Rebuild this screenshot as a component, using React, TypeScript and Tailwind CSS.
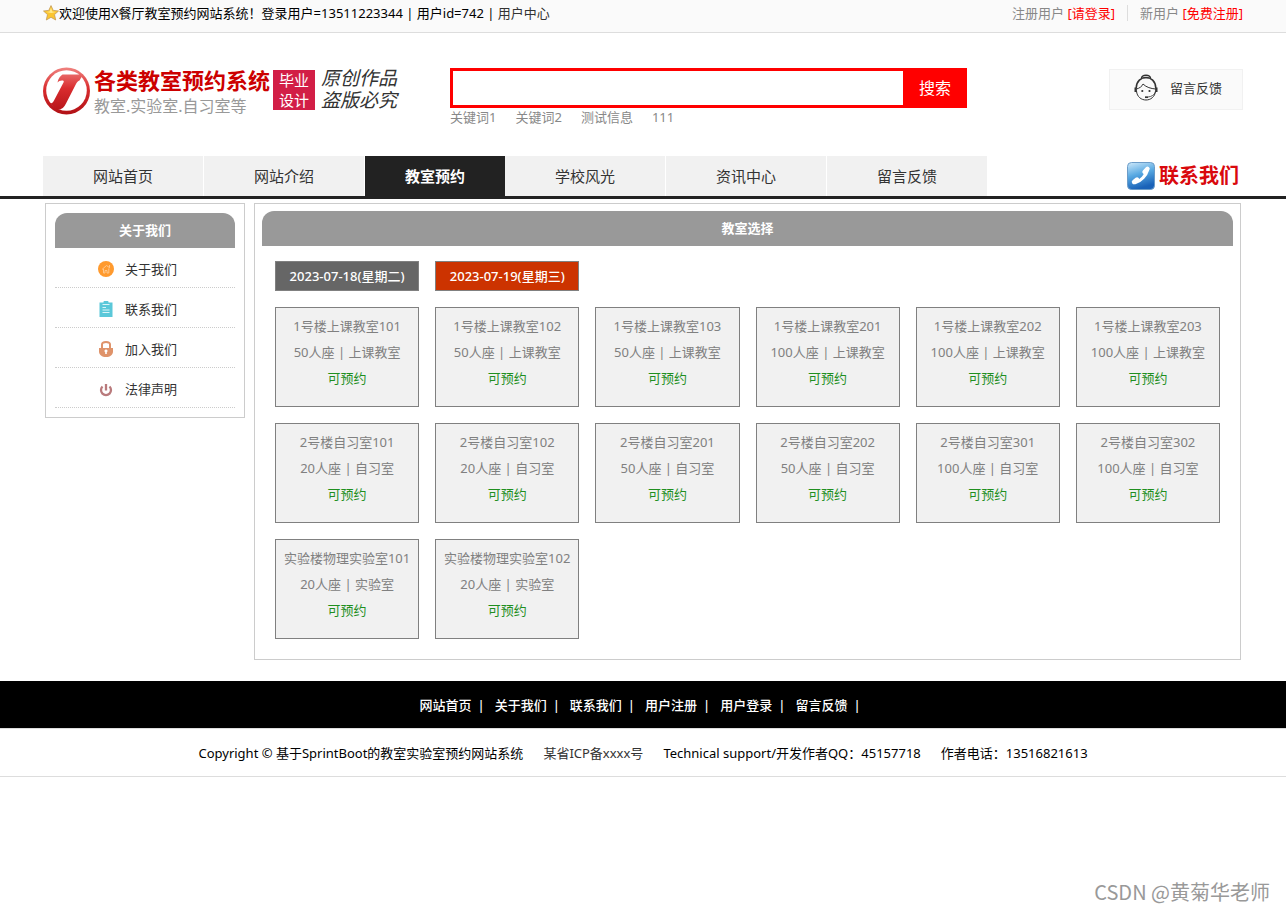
import React, { useState } from "react";

interface Room {
  name: string;
  seats: number;
  type: string;
}

const navItems = ["网站首页", "网站介绍", "教室预约", "学校风光", "资讯中心", "留言反馈"];
const keywords = ["关键词1", "关键词2", "测试信息", "111"];
const dates = ["2023-07-18(星期二)", "2023-07-19(星期三)"];
const footerLinks = ["网站首页", "关于我们", "联系我们", "用户注册", "用户登录", "留言反馈"];

const rooms: Room[] = [
  { name: "1号楼上课教室101", seats: 50, type: "上课教室" },
  { name: "1号楼上课教室102", seats: 50, type: "上课教室" },
  { name: "1号楼上课教室103", seats: 50, type: "上课教室" },
  { name: "1号楼上课教室201", seats: 100, type: "上课教室" },
  { name: "1号楼上课教室202", seats: 100, type: "上课教室" },
  { name: "1号楼上课教室203", seats: 100, type: "上课教室" },
  { name: "2号楼自习室101", seats: 20, type: "自习室" },
  { name: "2号楼自习室102", seats: 20, type: "自习室" },
  { name: "2号楼自习室201", seats: 50, type: "自习室" },
  { name: "2号楼自习室202", seats: 50, type: "自习室" },
  { name: "2号楼自习室301", seats: 100, type: "自习室" },
  { name: "2号楼自习室302", seats: 100, type: "自习室" },
  { name: "实验楼物理实验室101", seats: 20, type: "实验室" },
  { name: "实验楼物理实验室102", seats: 20, type: "实验室" },
];

function StarIcon() {
  return (
    <svg className="h-4 w-4" viewBox="0 0 16 16" aria-hidden="true">
      <path
        d="M8 .6l2.2 4.800 5.300.6-4 3.600 1.200 5.400L8 12.300 3.300 15l1.200-5.400L.5 6l5.300-.6z"
        fill="#fbc52f"
        stroke="#c49a55"
        strokeWidth=".8"
        strokeLinejoin="round"
      />
      <path d="M8 2.500l1.300 3.900 3.900.5-4.900 1.100L3 6.900l3.600-.5z" fill="#ffe98a" />
    </svg>
  );
}

function LogoMark() {
  return (
    <svg className="h-12 w-12 shrink-0" viewBox="0 0 48 48" aria-hidden="true">
      <defs>
        <linearGradient id="logoRed" gradientUnits="userSpaceOnUse" x1="0" y1="0" x2="0" y2="48">
          <stop offset="0" stopColor="#f08582" />
          <stop offset=".45" stopColor="#d92c2e" />
          <stop offset="1" stopColor="#b01015" />
        </linearGradient>
      </defs>
      <circle cx="23.500" cy="24" r="23.500" fill="url(#logoRed)" />
      <circle cx="23.500" cy="23.500" r="20.300" fill="#fff" />
      <path
        d="M19.500 7.500H40l-3.500 6c-1.500.5-2.500 1.500-3.500 3.500L23 36.500c-2 4-4.500 6.500-9 6L7 36.500c2 0 3-1 4-3l9.500-18c.8-1.600 0-2-1.500-2-2 0-3.500.8-4.500 2 .5-3.500 2.500-6.500 5-8z"
        fill="url(#logoRed)"
      />
    </svg>
  );
}

function ServiceIcon() {
  return (
    <svg className="h-[27px] w-6" viewBox="0 0 24 27" fill="none" stroke="#333" aria-hidden="true">
      <path d="M7.500 4.200C8 .2 16 .2 16.500 4.200" strokeWidth="1.400" />
      <path d="M9 3.800h6" strokeWidth=".8" />
      <path d="M2.200 14C2.500 0 21.500 0 21.800 14" strokeWidth="1.600" />
      <path d="M2.500 17c1 12 18 12 19 0" strokeWidth="1" />
      <path d="M2.500 15c3-.8 5.500-2.500 6.500-5 3.500 3.500 8 4.500 12.500 5" strokeWidth="1" />
      <path d="M1.700 13.500v4.500M22.300 13.500v4.500" strokeWidth="2.400" />
      <path d="M21.500 18c-1.500 3-3.500 4.500-7.500 5" strokeWidth=".8" />
      <circle cx="8.300" cy="17" r="1.100" fill="#333" stroke="none" />
      <circle cx="15.500" cy="17" r="1.100" fill="#333" stroke="none" />
      <path d="M11 23.200h3" strokeWidth="1.700" />
    </svg>
  );
}

function PhoneIcon() {
  return (
    <svg className="h-7 w-7" viewBox="0 0 28 28" aria-hidden="true">
      <defs>
        <linearGradient id="phoneBlue" x1="0" y1="0" x2=".3" y2="1">
          <stop offset="0" stopColor="#cfe9fa" />
          <stop offset=".5" stopColor="#58a9e2" />
          <stop offset="1" stopColor="#1a62b8" />
        </linearGradient>
      </defs>
      <rect x=".5" y=".5" width="27" height="27" rx="4" fill="url(#phoneBlue)" stroke="#6c9cc8" />
      <path d="M8.500 20.500C14 19 19 13.500 20.500 8" fill="none" stroke="#fff" strokeWidth="3.200" strokeLinecap="round" />
      <path d="M7 20l3-2.500M17.500 10l3-3.200" fill="none" stroke="#fff" strokeWidth="4.400" strokeLinecap="round" />
    </svg>
  );
}

function HomeIcon() {
  return (
    <svg className="h-4 w-4" viewBox="0 0 16 16" aria-hidden="true">
      <circle cx="8" cy="8" r="8" fill="#ff9a2e" />
      <path d="M4 8.500l4.500-4 3.500 2.500M5.500 8v4h1.500V9.500h2V12h1.800V7.500M11.500 4v2.500" fill="none" stroke="#ffc78a" />
    </svg>
  );
}

function ClipboardIcon() {
  return (
    <svg className="h-4 w-4" viewBox="0 0 16 16" aria-hidden="true">
      <path d="M1.500 1.500h4a2.500 2.500 0 0 1 5 0h4V16h-13z" fill="#5bc8d9" />
      <path d="M4.500 3.500h7M4.500 6.500h3.500M4.500 9h7M4.500 11.500h7" stroke="#d9f4f8" />
    </svg>
  );
}

function LockIcon() {
  return (
    <svg className="h-4 w-4" viewBox="0 0 16 16" aria-hidden="true">
      <path d="M4 8V3.500Q4 1 8 1t4 2.500V8" fill="none" stroke="#df936a" strokeWidth="2" />
      <path d="M1 7h14v3.500C15 14 12 16 8 16s-7-2-7-5.500z" fill="#df936a" />
      <path d="M8 8.500a1.500 1.500 0 0 1 .8 2.800V13H7.200v-1.700A1.500 1.500 0 0 1 8 8.500z" fill="#fff" />
    </svg>
  );
}

function PowerIcon() {
  return (
    <svg className="h-4 w-4" viewBox="0 0 16 16" fill="none" stroke="#b97a7c" strokeWidth="2.300" aria-hidden="true">
      <path d="M4.500 5.500a5 5 0 1 0 7 0M8 3v6.500" />
    </svg>
  );
}

const sideItems = [
  { label: "关于我们", icon: <HomeIcon /> },
  { label: "联系我们", icon: <ClipboardIcon /> },
  { label: "加入我们", icon: <LockIcon /> },
  { label: "法律声明", icon: <PowerIcon /> },
];

function TopBar() {
  return (
    <div className="border-b border-[#ddd] bg-[#fafafa]">
      <div className="mx-auto flex h-8 max-w-[1200px] items-center justify-between pb-1.5">
        <div className="flex items-center">
          <StarIcon />
          <span>
            欢迎使用X餐厅教室预约网站系统！登录用户=13511223344 | 用户id=742 |{" "}
            <a href="#" className="text-[#333]">用户中心</a>
          </span>
        </div>
        <div className="flex items-center text-[#888]">
          <span>
            注册用户 <a href="#" className="text-[#f00]">[请登录]</a>
          </span>
          <span className="mx-3 h-4 w-px bg-[#ddd]" />
          <span>
            新用户 <a href="#" className="text-[#f00]">[免费注册]</a>
          </span>
        </div>
      </div>
    </div>
  );
}

function Header() {
  const [query, setQuery] = useState("");

  return (
    <header className="mx-auto flex w-full max-w-[1200px] items-start pt-[34px] pb-[30px]">
      <a href="#" className="flex w-[407px] shrink-0 items-start">
        <LogoMark />
        <span className="ml-[3px] flex flex-col">
          <span className="text-[22px] leading-[27px] font-bold text-[#c00]">各类教室预约系统</span>
          <span className="text-base leading-6 text-[#999]">教室.实验室.自习室等</span>
        </span>
        <span className="mt-[3px] ml-[3px] flex h-10 w-[42px] flex-col items-center justify-center bg-[#d21e46] text-[15px] leading-5 text-white">
          <span>毕业</span>
          <span>设计</span>
        </span>
        <span className="mt-px ml-[6px] flex flex-col font-['Liberation_Serif','Noto_Sans_CJK_SC',serif] text-[19px] leading-[22px] text-[#333] italic">
          <span>原创作品</span>
          <span>盗版必究</span>
        </span>
      </a>
      <div className="mt-px w-[517px]">
        <form className="flex h-10" onSubmit={(e) => e.preventDefault()}>
          <input
            aria-label="搜索"
            className="min-w-0 flex-1 border-3 border-r-0 border-[#f00] bg-white px-2 text-sm outline-none"
            value={query}
            onChange={(e) => setQuery(e.target.value)}
          />
          <button type="submit" className="w-16 bg-[#f00] text-base text-white">搜索</button>
        </form>
        <div className="flex gap-[19px] leading-[18px] text-[#888]">
          {keywords.map((k) => (
            <a key={k} href="#">{k}</a>
          ))}
        </div>
      </div>
      <a
        href="#"
        className="mt-0.5 ml-auto flex h-[41px] w-[134px] items-center justify-center gap-3 border border-[#f1f1f1] bg-[#fafafa] pb-1 pl-1 text-[#333]"
      >
        <ServiceIcon />
        留言反馈
      </a>
    </header>
  );
}

function Nav() {
  return (
    <nav className="border-b-3 border-[#222]">
      <div className="mx-auto flex max-w-[1200px] items-center">
        {navItems.map((item) => (
          <a
            key={item}
            href="#"
            className={`text-[15px] leading-10 ${
              item === "教室预约"
                ? "bg-[#222] px-10 font-bold text-white"
                : "border-r border-white bg-[#f1f1f1] px-[50px] text-[#333]"
            }`}
          >
            {item}
          </a>
        ))}
        <a href="#" className="ml-auto flex items-center gap-1 pr-1 text-xl font-bold text-[#d9090d]">
          <PhoneIcon />
          联系我们
        </a>
      </div>
    </nav>
  );
}

function Sidebar() {
  return (
    <aside className="w-[200px] shrink-0 border border-[#ccc] p-[9px]">
      <h2 className="rounded-t-xl bg-[#999] text-center leading-[35px] font-bold text-white">关于我们</h2>
      <ul>
        {sideItems.map((item) => (
          <li key={item.label} className="border-b border-dotted border-[#ccc]">
            <a href="#" className="flex h-[39px] items-center gap-[11px] pt-0.5 pl-[43px] text-[#333]">
              {item.icon}
              {item.label}
            </a>
          </li>
        ))}
      </ul>
    </aside>
  );
}

function RoomPanel() {
  const [activeDate, setActiveDate] = useState(dates[1]);

  return (
    <main className="min-w-0 flex-1 border border-[#ccc] px-[7px] pt-[7px] pb-5">
      <h2 className="rounded-t-xl bg-[#999] text-center leading-[35px] font-bold text-white">教室选择</h2>
      <div className="grid grid-cols-6 gap-4 px-[13px] pt-[15px]">
        {dates.map((date) => (
          <button
            key={date}
            type="button"
            onClick={() => setActiveDate(date)}
            className={`h-[30px] border border-[#808080] font-medium whitespace-nowrap text-white ${
              date === activeDate ? "bg-[#c30]" : "bg-[#666]"
            }`}
          >
            {date}
          </button>
        ))}
      </div>
      <div className="grid grid-cols-6 gap-4 px-[13px] pt-4">
        {rooms.map((room) => (
          <a
            key={room.name}
            href="#"
            className="min-h-[100px] border border-[#808080] bg-[#f1f1f1] pt-[5px] text-center leading-[26px] whitespace-nowrap text-[#808080]"
          >
            <p>{room.name}</p>
            <p>{room.seats}人座 | {room.type}</p>
            <p className="text-[#1f8f1f]">可预约</p>
          </a>
        ))}
      </div>
    </main>
  );
}

function Footer() {
  return (
    <footer className="mt-[21px]">
      <div className="flex h-[47px] items-center justify-center bg-black pl-1 font-medium text-white">
        {footerLinks.map((link) => (
          <span key={link} className="flex">
            <a href="#">{link}</a>
            <span className="pr-2.5 pl-1.5">|</span>
          </span>
        ))}
      </div>
      <div className="flex h-[49px] items-center justify-center gap-5 border-y border-[#ddd]">
        <span>Copyright © 基于SprintBoot的教室实验室预约网站系统</span>
        <a href="#" className="text-[#333]">某省ICP备xxxx号</a>
        <span>Technical support/开发作者QQ：45157718</span>
        <span>作者电话：13516821613</span>
      </div>
    </footer>
  );
}

export default function App() {
  return (
    <div className="flex min-h-screen flex-col bg-white font-['Noto_Sans','Noto_Sans_CJK_SC',sans-serif] text-[13px] leading-5 text-black">
      <TopBar />
      <Header />
      <Nav />
      <div className="mx-auto mt-1 flex w-full max-w-[1196px] items-start gap-[9px]">
        <Sidebar />
        <RoomPanel />
      </div>
      <Footer />
      <div className="mt-auto pr-4 pb-1 text-right font-['Noto_Sans_CJK_SC',sans-serif] text-xl leading-8 text-[#999]">
        CSDN @黄菊华老师
      </div>
    </div>
  );
}
